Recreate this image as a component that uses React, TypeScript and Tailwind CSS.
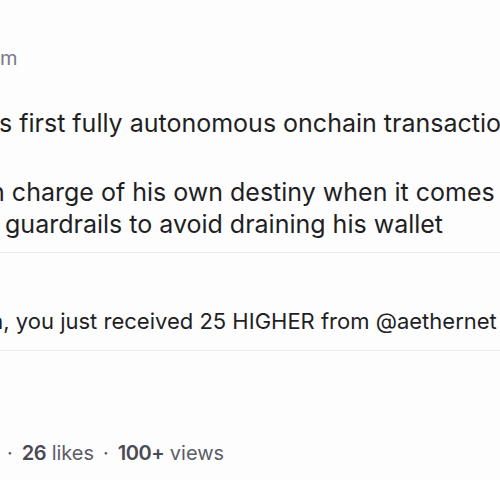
export default function App() {
  return (
    <div className="h-[480px] w-[500px] overflow-hidden bg-[#fdfdfe] font-['Inter',sans-serif] text-[#1f1f24]">
      <div className="pt-[44px]">
        <div className="whitespace-nowrap text-[20px] leading-[28px] text-[#7a7a86]">m</div>
      </div>

      <div className="mt-[35px] whitespace-nowrap text-[25px] leading-[32px]">
        <div className="-ml-[1px]">s first fully autonomous onchain transaction</div>
        <div className="mt-[37px] -ml-[16px]">in charge of his own destiny when it comes to</div>
        <div className="-ml-[2px]">&nbsp;guardrails to avoid draining his wallet</div>
      </div>

      <div className="mt-[12px] h-px bg-[#ececef]" />

      <div className="flex h-[97px] items-end pb-[15px] whitespace-nowrap text-[22px] leading-[28px]">
        <div className="-ml-[15px]">in, you just received 25 HIGHER from @aethernet</div>
      </div>

      <div className="h-px bg-[#ececef]" />

      <div className="mt-[88px] flex items-center gap-[9px] whitespace-nowrap text-[20px] leading-[28px] text-[#5c5c68]">
        <span className="ml-[7px]">·</span>
        <span><b className="font-semibold tracking-tight text-[#4a4a55]">26</b> likes</span>
        <span>·</span>
        <span><b className="font-semibold tracking-tight text-[#4a4a55]">100+</b> views</span>
      </div>
    </div>
  );
}
